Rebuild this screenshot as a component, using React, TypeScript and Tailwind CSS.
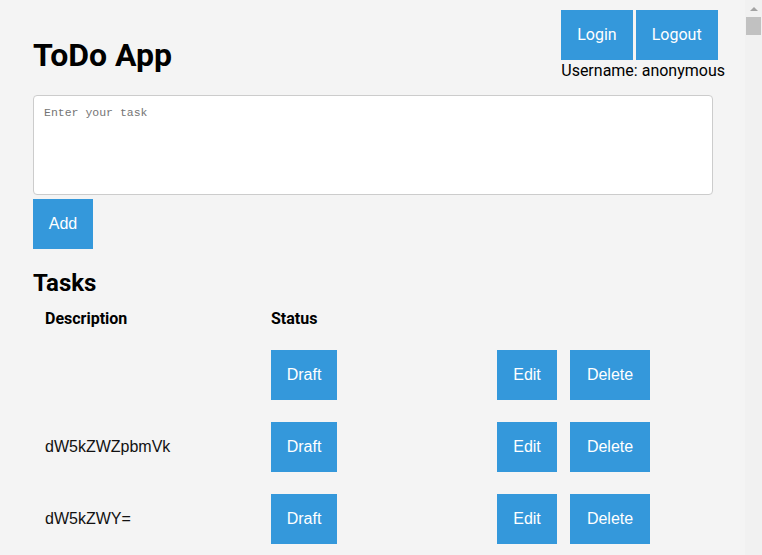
import React from 'react';

const tasks = [
  { id: 1, description: '' },
  { id: 2, description: 'dW5kZWZpbmVk' },
  { id: 3, description: 'dW5kZWY=' },
];

const btn =
  'bg-[#3498db] text-white text-[16px] h-[50px] px-0 font-["Liberation_Sans",Arial,sans-serif]';

export default function App() {
  return (
    <div className="flex h-[555px] overflow-hidden bg-[#f4f4f4] text-black font-['Roboto',sans-serif]">
      <div className="flex-1 pl-[33px] pr-[20px]">
        {/* Header */}
        <div className="flex justify-between items-start">
          <h1 className="mt-[37px] text-[32px] font-bold leading-[37px]">ToDo App</h1>
          <div className="mt-[10px] flex flex-col">
            <div className="flex gap-[3px]">
              <button className="bg-[#3498db] text-white text-[16px] h-[50px] px-4 font-['Roboto',sans-serif]">
                Login
              </button>
              <button className="bg-[#3498db] text-white text-[16px] h-[50px] px-4 font-['Roboto',sans-serif]">
                Logout
              </button>
            </div>
            <span className="text-[16px] leading-[19px] mt-px">Username: anonymous</span>
          </div>
        </div>

        {/* New task */}
        <div className="w-[680px] mt-[15px]">
          <textarea
            placeholder="Enter your task"
            className="block w-full h-[100px] bg-white border border-[#ccc] rounded-[4px] px-[10px] pt-[10px] text-[11.5px] leading-[14px] font-['Liberation_Mono',monospace] placeholder:text-[#757575] resize-none outline-none"
          />
          <button className={`${btn} mt-[4px] w-[60px]`}>Add</button>

          <h2 className="mt-[20px] text-[24px] font-bold leading-[28px]">Tasks</h2>

          <table className="w-full mt-[1px] table-fixed border-collapse">
            <colgroup>
              <col className="w-[226px]" />
              <col className="w-[226px]" />
              <col />
            </colgroup>
            <thead>
              <tr>
                <th className="text-left px-3 py-[11px] text-[16px] font-bold leading-[19px]">Description</th>
                <th className="text-left px-3 py-[11px] text-[16px] font-bold leading-[19px]">Status</th>
                <th className="px-3 py-[11px]"></th>
              </tr>
            </thead>
            <tbody>
              {tasks.map((t) => (
                <tr key={t.id}>
                  <td className="px-3 py-[11px] text-[16px] text-[#111] font-['Liberation_Sans',Arial,sans-serif]">
                    {t.description}
                  </td>
                  <td className="px-3 py-[11px]">
                    <button className={`${btn} w-[66px]`}>Draft</button>
                  </td>
                  <td className="px-3 py-[11px]">
                    <div className="flex gap-[13px]">
                      <button className={`${btn} w-[60px]`}>Edit</button>
                      <button className={`${btn} w-[80px]`}>Delete</button>
                    </div>
                  </td>
                </tr>
              ))}
            </tbody>
          </table>
        </div>
      </div>

      {/* Scrollbar */}
      <div className="w-[17px] flex flex-col items-center bg-[#f1f1f1]">
        <div className="h-[17px] flex items-center justify-center">
          <div className="w-0 h-0 border-l-[4px] border-r-[4px] border-b-[4px] border-l-transparent border-r-transparent border-b-[#a3a3a3]" />
        </div>
        <div className="w-[15px] h-[18px] bg-[#c1c1c1]" />
      </div>
    </div>
  );
}
